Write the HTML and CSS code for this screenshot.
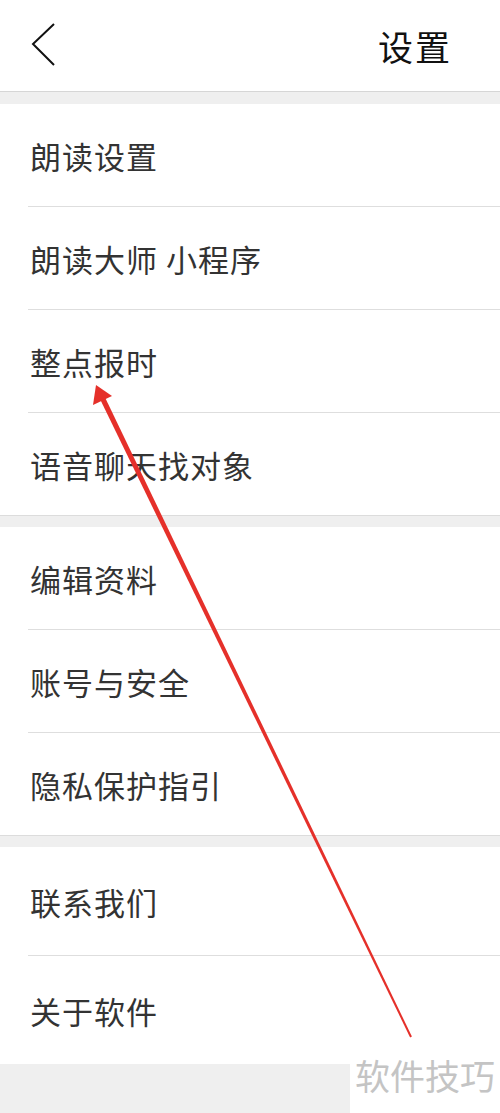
FILE: index.html
```html
<!DOCTYPE html>
<html lang="zh-CN">
<head>
    <meta charset="UTF-8">
    <meta name="viewport" content="width=device-width, initial-scale=1.0">
    <title>设置</title>
    <link rel="stylesheet" href="styles.css">
</head>
<body>
    <header class="topbar">
        <svg class="back" width="26" height="46" viewBox="0 0 26 46">
            <polyline points="23,2 2,22 23,43" fill="none" stroke="#111" stroke-width="2"/>
        </svg>
        <h1 class="title">设置</h1>
    </header>
    <main class="settings">
        <ul class="group">
            <li class="row">朗读设置</li>
            <li class="row">朗读大师 小程序</li>
            <li class="row">整点报时</li>
            <li class="row">语音聊天找对象</li>
        </ul>
        <ul class="group">
            <li class="row">编辑资料</li>
            <li class="row">账号与安全</li>
            <li class="row">隐私保护指引</li>
        </ul>
        <ul class="group group-last">
            <li class="row">联系我们</li>
            <li class="row">关于软件</li>
        </ul>
    </main>

    <!-- annotation drawn over the screenshot -->
    <svg class="arrow" width="500" height="1113" viewBox="0 0 500 1113">
        <polygon points="411.9,1036.6 410.1,1037.4 100.7,400.5 105.3,398" fill="#e5302a"/>
        <polygon points="96,385 93,405 112,396" fill="#e5302a"/>
    </svg>
    <div class="watermark">软件技巧</div>
</body>
</html>
```

FILE: styles.css
```css
body {
    margin: 0;
    height: 1113px;
    overflow: hidden;
    position: relative;
    background-color: #efefef;
    font-family: "Noto Sans CJK SC", "Noto Sans", sans-serif;
    color: #333;
}
.topbar {
    height: 91px;
    background-color: #fff;
    border-bottom: 1px solid #d6d6d6;
    display: flex;
    align-items: center;
    justify-content: space-between;
    padding: 0 48px 0 31px;
}
.back {
    display: block;
    margin-top: -2px;
}
.title {
    margin: 0;
    font-size: 35px;
    font-weight: normal;
    color: #111;
    letter-spacing: 2px;
}
.settings {
    padding-top: 12px;
}
.group {
    list-style: none;
    margin: 0 0 11px 0;
    padding: 0;
    background-color: #fff;
    border-bottom: 1px solid #dcdcdc;
}
.row {
    height: 102px;
    margin-left: 28px;
    padding-left: 2px;
    display: flex;
    align-items: center;
    font-size: 31px;
    letter-spacing: 1px;
}
.row + .row {
    border-top: 1px solid #dedede;
}
.group-last .row {
    height: 108px;
}
.group-last {
    border-bottom: none;
}
.arrow {
    position: absolute;
    top: 0;
    left: 0;
    pointer-events: none;
}
.watermark {
    position: absolute;
    right: 0;
    bottom: 0;
    width: 150px;
    height: 56px;
    background-color: #fff;
    color: #c4c4c4;
    font-size: 35px;
    line-height: 1;
    display: flex;
    justify-content: flex-end;
    padding-right: 5px;
    box-sizing: border-box;
}
```
